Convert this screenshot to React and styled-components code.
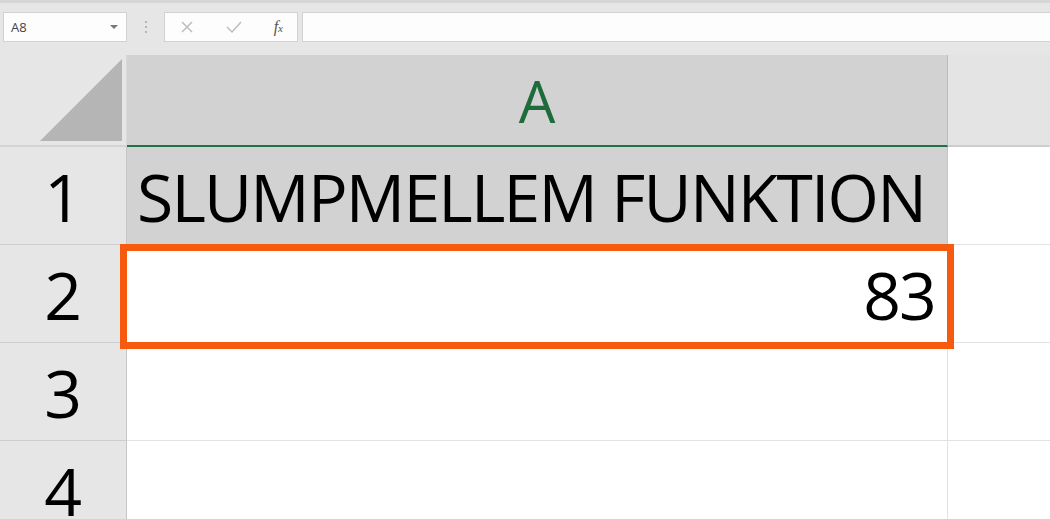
import React from "react";
import styled, { createGlobalStyle } from "styled-components";

const GlobalStyle = createGlobalStyle`
  html, body {
    margin: 0;
    padding: 0;
    background: #ffffff;
    overflow: hidden;
  }
  body {
    font-family: "Open Sans", "Liberation Sans", sans-serif;
  }
`;

const Page = styled.div`
  width: 1050px;
  height: 519px;
  overflow: hidden;
  background: #e6e6e6;
`;

const Toolbar = styled.div`
  height: 55px;
  border-top: 3px solid #d6d6d6;
  display: flex;
  align-items: flex-start;
  padding: 9px 0 0 3px;
  box-sizing: border-box;
`;

const Box = styled.div`
  height: 30px;
  box-sizing: border-box;
  background: #fdfdfd;
  border: 1px solid #d2d2d2;
  display: flex;
  align-items: center;
`;

const NameBox = styled(Box)`
  width: 124px;
  padding: 0 8px 0 7px;
  justify-content: space-between;
  font-size: 13px;
  color: #444;
`;

const Caret = styled.span`
  width: 0;
  height: 0;
  border-left: 4px solid transparent;
  border-right: 4px solid transparent;
  border-top: 4px solid #777;
`;

const Dots = styled.div`
  width: 37px;
  height: 30px;
  display: flex;
  flex-direction: column;
  align-items: center;
  justify-content: center;
  gap: 3px;
  span {
    width: 2px;
    height: 2px;
    background: #b5b5b5;
  }
`;

const FxBox = styled(Box)`
  width: 134px;
  padding: 0 14px 0 15px;
  justify-content: space-between;
`;

const FxLabel = styled.span`
  font-family: "Liberation Serif", serif;
  font-style: italic;
  font-size: 16px;
  color: #555;
  span {
    font-size: 11px;
  }
`;

const FormulaInput = styled(Box)`
  flex: 1;
  margin-left: 4px;
  border-right: none;
`;

const Sheet = styled.div`
  display: grid;
  grid-template-columns: 127px 821px 1fr;
  grid-template-rows: 92px repeat(4, 98px);
`;

const Corner = styled.div`
  background: #e6e6e6;
  border-right: 1px solid #d9d9d9;
  border-bottom: 2px solid #d3d3d3;
  box-sizing: border-box;
  display: flex;
  align-items: flex-end;
  justify-content: flex-end;
  padding: 0 4px 4px 0;
`;

const ColHeader = styled.div`
  background: ${(p) => (p.$selected ? "#d2d2d2" : "#e4e4e4")};
  border-bottom: 2px solid ${(p) => (p.$selected ? "#217346" : "#cdcdcd")};
  border-right: 1px solid ${(p) => (p.$selected ? "#bdbdbd" : "transparent")};
  box-sizing: border-box;
  color: #1e6b3c;
  font-size: 58px;
  line-height: 1;
  display: flex;
  align-items: center;
  justify-content: center;
  padding-top: 2px;
`;

const RowHeader = styled.div`
  background: #e6e6e6;
  border-right: 1px solid #c6c6c6;
  border-bottom: 1px solid #cdcdcd;
  box-sizing: border-box;
  color: #000;
  font-size: 66px;
  line-height: 1;
  display: flex;
  align-items: center;
  justify-content: center;
  padding-top: 1px;
`;

const Cell = styled.div`
  position: relative;
  z-index: ${(p) => (p.$active ? 2 : "auto")};
  background: ${(p) => (p.$fill ? "#d2d2d2" : "#ffffff")};
  border-right: 1px solid ${(p) => (p.$fill ? "#c4c4c4" : "#e2e2e2")};
  border-bottom: 1px solid #e2e2e2;
  box-sizing: border-box;
  color: #000;
  font-size: 66px;
  letter-spacing: -1.8px;
  line-height: 1;
  white-space: nowrap;
  display: flex;
  align-items: center;
  justify-content: ${(p) => (p.$right ? "flex-end" : "flex-start")};
  padding: 1px 12px 0 10px;

  ${(p) =>
    p.$active &&
    `
    &::after {
      content: "";
      position: absolute;
      top: -1px;
      left: -7px;
      right: -7px;
      bottom: -7px;
      border: 7px solid #f55a0e;
      box-sizing: border-box;
      pointer-events: none;
    }
  `}
`;

const Blank = styled.div`
  background: #ffffff;
  border-bottom: 1px solid #e2e2e2;
  box-sizing: border-box;
`;

function CornerTriangle() {
  return (
    <svg width="82" height="82" viewBox="0 0 82 82">
      <polygon points="0,82 82,0 82,82" fill="#b5b5b5" />
    </svg>
  );
}

const rows = [
  { n: 1, value: "SLUMPMELLEM FUNKTION", fill: true },
  { n: 2, value: "83", right: true, active: true },
  { n: 3, value: "" },
  { n: 4, value: "" },
];

export default function App() {
  return (
    <Page>
      <GlobalStyle />
      <Toolbar>
        <NameBox>
          A8
          <Caret />
        </NameBox>
        <Dots>
          <span />
          <span />
          <span />
        </Dots>
        <FxBox>
          <svg width="14" height="14" viewBox="0 0 14 14">
            <path d="M2 2 L12 12 M12 2 L2 12" stroke="#bdbdbd" strokeWidth="1.5" fill="none" />
          </svg>
          <svg width="16" height="14" viewBox="0 0 16 14">
            <path d="M1 7 L6 12 L15 2" stroke="#bdbdbd" strokeWidth="1.5" fill="none" />
          </svg>
          <FxLabel>
            f<span>x</span>
          </FxLabel>
        </FxBox>
        <FormulaInput />
      </Toolbar>
      <Sheet>
        <Corner>
          <CornerTriangle />
        </Corner>
        <ColHeader $selected>A</ColHeader>
        <ColHeader />
        {rows.map((r) => (
          <React.Fragment key={r.n}>
            <RowHeader>{r.n}</RowHeader>
            <Cell $fill={r.fill} $right={r.right} $active={r.active}>
              {r.value}
            </Cell>
            <Blank />
          </React.Fragment>
        ))}
      </Sheet>
    </Page>
  );
}
